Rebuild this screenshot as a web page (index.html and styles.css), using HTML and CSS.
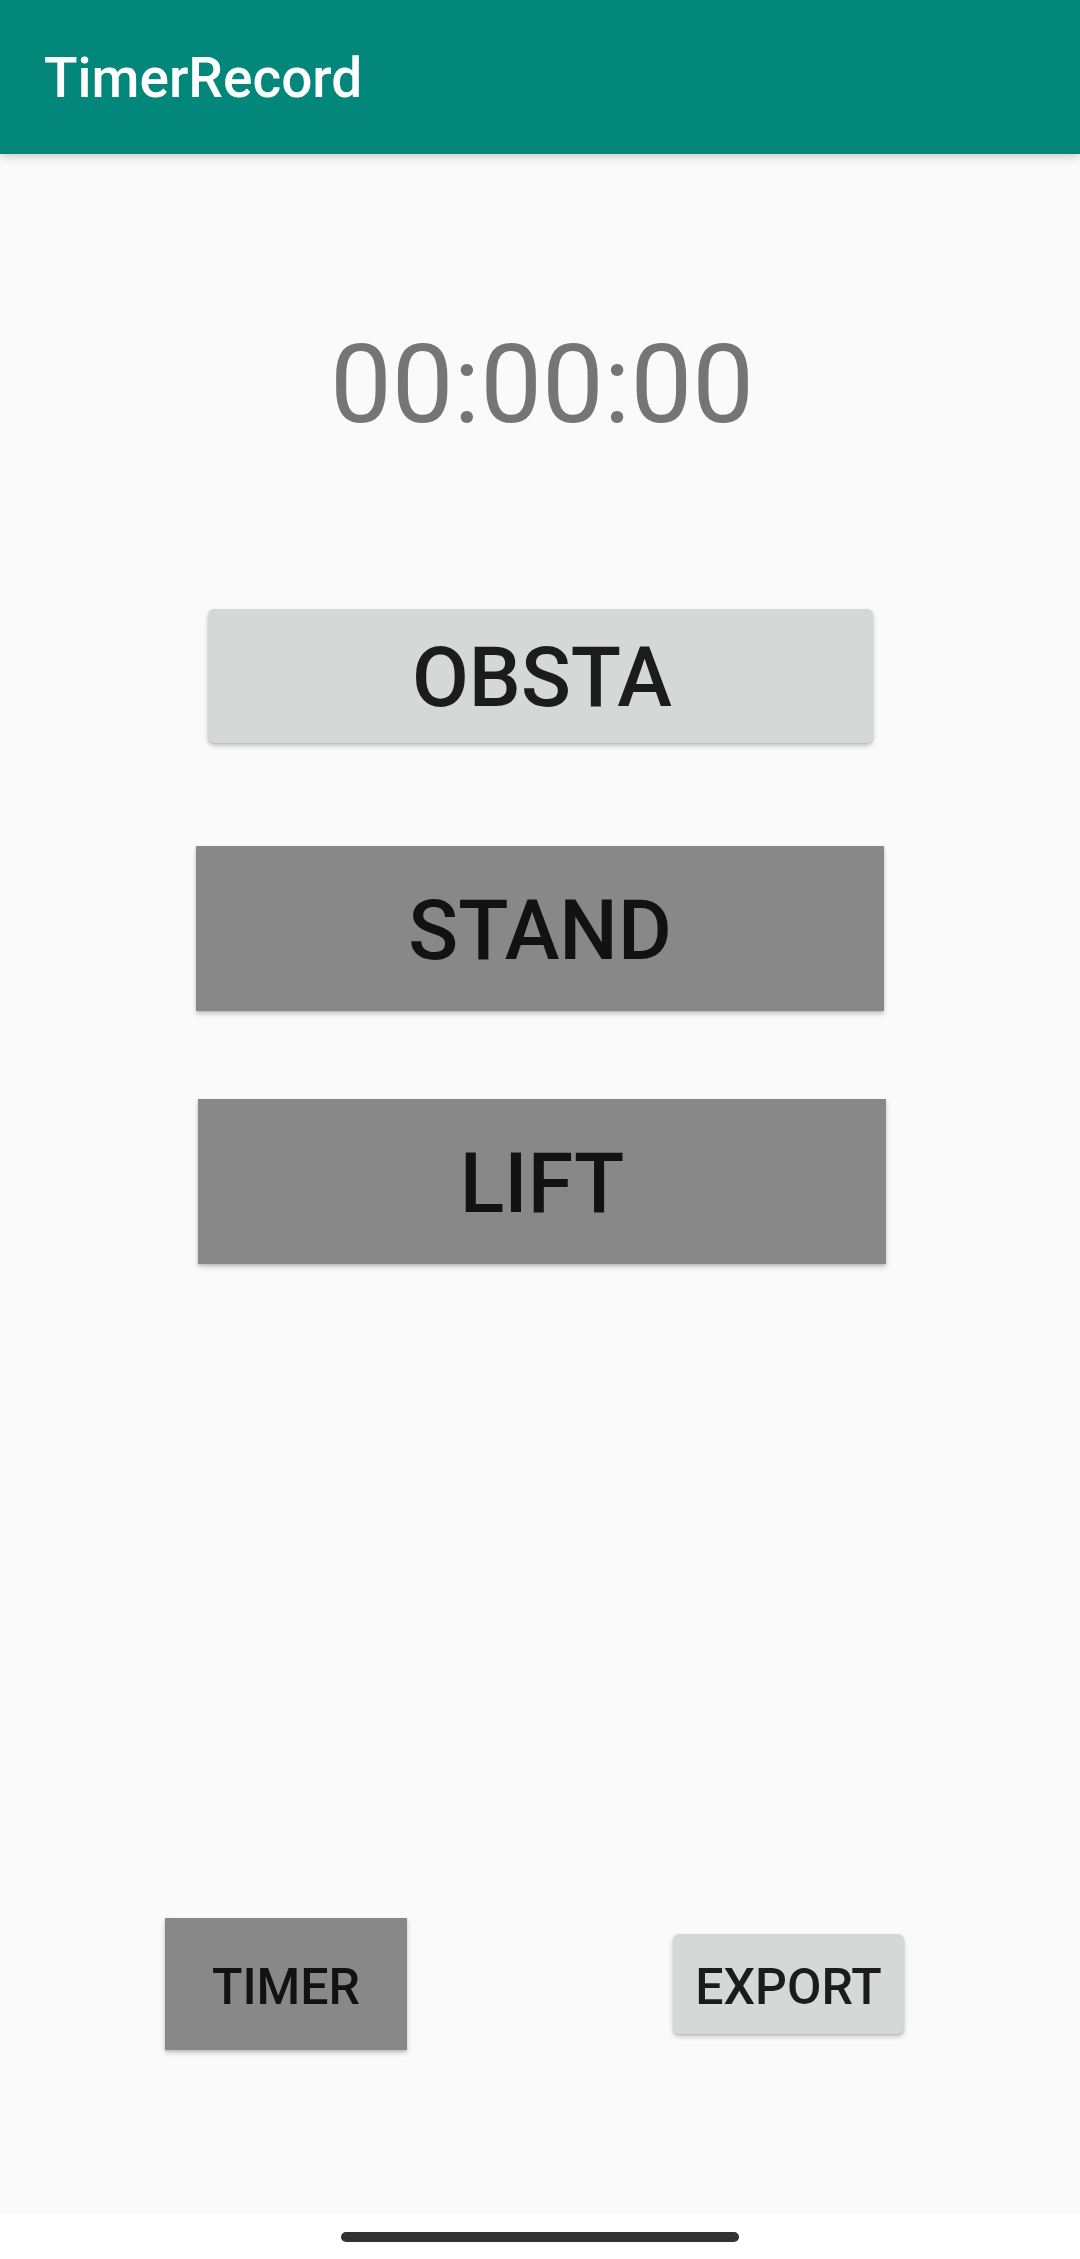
FILE: index.html
```html
<!DOCTYPE html>
<html lang="en">
<head>
<meta charset="utf-8">
<title>TimerRecord</title>
<link rel="stylesheet" href="styles.css">
</head>
<body>
<div class="screen">
  <header class="appbar">
    <h1 class="title">TimerRecord</h1>
  </header>
  <main class="content">
    <div class="clock">00:00:00</div>
    <button class="btn btn-light btn-obsta">OBSTA</button>
    <button class="btn btn-dark btn-big btn-stand">STAND</button>
    <button class="btn btn-dark btn-big btn-lift">LIFT</button>
    <div class="bottom-row">
      <button class="btn btn-dark btn-small btn-timer">TIMER</button>
      <button class="btn btn-light btn-small btn-export">EXPORT</button>
    </div>
  </main>
  <footer class="navbar">
    <div class="handle"></div>
  </footer>
</div>
</body>
</html>
```

FILE: styles.css
```css
html, body {
  margin: 0;
  padding: 0;
}
body {
  width: 1080px;
  height: 2259px;
  overflow: hidden;
  font-family: Roboto, "Noto Sans", "Liberation Sans", sans-serif;
  background: #ffffff;
}
.screen {
  display: flex;
  flex-direction: column;
  height: 2259px;
}
.appbar {
  height: 154px;
  flex: 0 0 154px;
  background: #02877a;
  display: flex;
  align-items: center;
  padding-left: 44px;
  box-shadow: 0 3px 8px rgba(0, 0, 0, 0.18);
  position: relative;
  z-index: 2;
}
.title {
  margin: 0;
  color: #ffffff;
  font-size: 55px;
  font-weight: 500;
  line-height: 1;
  padding-top: 2px;
}
.content {
  flex: 0 0 2060px;
  height: 2060px;
  background: #fafafa;
  display: flex;
  flex-direction: column;
  align-items: center;
}
.clock {
  margin-top: 176px;
  padding-left: 4px;
  font-size: 110px;
  line-height: 1;
  height: 110px;
  color: #757575;
  font-weight: 400;
}
.btn {
  border: none;
  margin: 0;
  padding: 5px 0 0 0;
  font-family: Roboto, "Noto Sans", "Liberation Sans", sans-serif;
  font-weight: 500;
  color: rgba(0, 0, 0, 0.87);
  display: flex;
  align-items: center;
  justify-content: center;
  line-height: 1;
  box-sizing: border-box;
}
.btn-light {
  background: #d6d7d7;
  border-radius: 6px;
  box-shadow: 0 3px 5px rgba(0, 0, 0, 0.2), 0 1px 2px rgba(0, 0, 0, 0.12);
}
.btn-dark {
  background: #888888;
  box-shadow: 0 3px 5px rgba(0, 0, 0, 0.2), 0 1px 2px rgba(0, 0, 0, 0.1);
}
.btn-obsta {
  margin-top: 169px;
  width: 665px;
  height: 134px;
  font-size: 82.5px;
  padding-left: 4px;
}
.btn-big {
  width: 688px;
  height: 165px;
  font-size: 82.5px;
}
.btn-stand {
  margin-top: 103px;
}
.btn-lift {
  margin-top: 88px;
  margin-left: 4px;
}
.bottom-row {
  margin-top: 654px;
  align-self: stretch;
  display: flex;
  align-items: center;
  height: 132px;
}
.btn-small {
  font-size: 50px;
}
.btn-timer {
  margin-left: 165px;
  width: 242px;
  height: 132px;
}
.btn-export {
  margin-left: auto;
  margin-right: 176px;
  width: 231px;
  height: 100px;
}
.navbar {
  flex: 0 0 45px;
  height: 45px;
  background: #ffffff;
  display: flex;
  justify-content: center;
  padding-top: 18px;
  box-sizing: border-box;
}
.handle {
  width: 398px;
  height: 10px;
  border-radius: 5px;
  background: #333333;
}
```
